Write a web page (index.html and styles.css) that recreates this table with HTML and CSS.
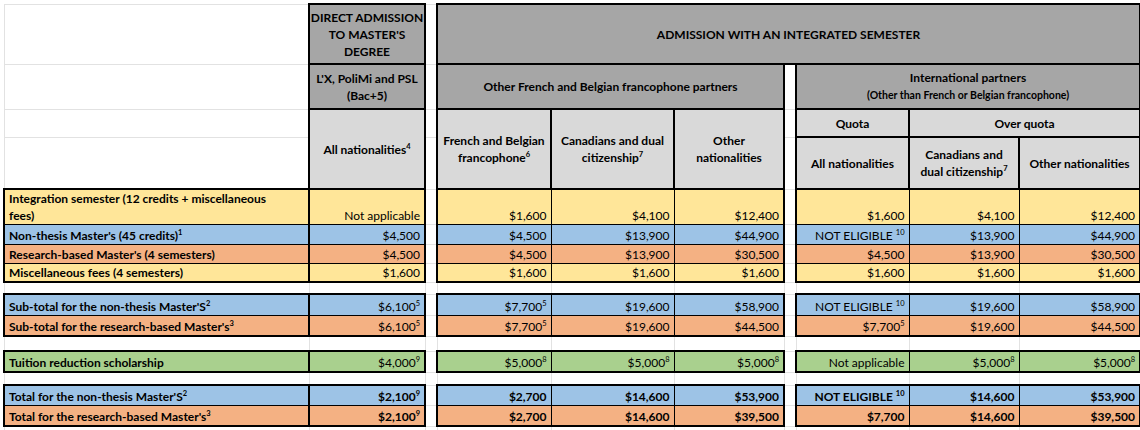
FILE: index.html
```html
<!DOCTYPE html>
<html lang="en">
<head>
<meta charset="utf-8">
<title>Tuition fees</title>
<link rel="stylesheet" href="styles.css">
</head>
<body>
<table class="sheet">
  <colgroup>
    <col class="c-a"><col class="c-b"><col class="c-sp"><col class="c-c"><col class="c-d"><col class="c-e"><col class="c-sp"><col class="c-f"><col class="c-g"><col class="c-h">
  </colgroup>
  <tr class="h1">
    <td class="blank"></td>
    <td class="hd dark">DIRECT ADMISSION<br>TO MASTER'S<br>DEGREE</td>
    <td class="blank"></td>
    <td class="hd dark" colspan="7">ADMISSION WITH AN INTEGRATED SEMESTER</td>
  </tr>
  <tr class="h2">
    <td class="blank"></td>
    <td class="hd dark">L'X, PoliMi and PSL<br>(Bac+5)</td>
    <td class="blank"></td>
    <td class="hd dark" colspan="3">Other French and Belgian francophone partners</td>
    <td class="blank"></td>
    <td class="hd dark" colspan="3">International partners<br><span class="small">(Other than French or Belgian francophone)</span></td>
  </tr>
  <tr class="h3">
    <td class="blank"></td>
    <td class="hd light" rowspan="2">All nationalities<sup class="s">4</sup></td>
    <td class="blank"></td>
    <td class="hd light" rowspan="2">French and Belgian<br>francophone<sup class="s">6</sup></td>
    <td class="hd light" rowspan="2">Canadians and dual<br>citizenship<sup class="s">7</sup></td>
    <td class="hd light" rowspan="2">Other<br>nationalities</td>
    <td class="blank"></td>
    <td class="hd light">Quota</td>
    <td class="hd light" colspan="2">Over quota</td>
  </tr>
  <tr class="h4">
    <td class="blank"></td>
    <td class="blank"></td>
    <td class="blank"></td>
    <td class="hd light">All nationalities</td>
    <td class="hd light">Canadians and<br>dual citizenship<sup class="s">7</sup></td>
    <td class="hd light">Other nationalities</td>
  </tr>

  <tr class="r-int top yel">
    <td class="lbl gl gr wrap">Integration semester (12 credits + miscellaneous<br>fees)</td>
    <td class="num gl gr">Not applicable</td>
    <td class="blank"></td>
    <td class="num gl">$1,600</td><td class="num">$4,100</td><td class="num gr">$12,400</td>
    <td class="blank"></td>
    <td class="num gl">$1,600</td><td class="num">$4,100</td><td class="num gr">$12,400</td>
  </tr>
  <tr class="r20 blu">
    <td class="lbl gl gr">Non-thesis Master's (45 credits)<sup class="s">1</sup></td>
    <td class="num gl gr">$4,500</td>
    <td class="blank"></td>
    <td class="num gl">$4,500</td><td class="num">$13,900</td><td class="num gr">$44,900</td>
    <td class="blank"></td>
    <td class="num gl">NOT ELIGIBLE <sup class="s">10</sup></td><td class="num">$13,900</td><td class="num gr">$44,900</td>
  </tr>
  <tr class="r19 ora">
    <td class="lbl gl gr">Research-based Master's (4 semesters)</td>
    <td class="num gl gr">$4,500</td>
    <td class="blank"></td>
    <td class="num gl">$4,500</td><td class="num">$13,900</td><td class="num gr">$30,500</td>
    <td class="blank"></td>
    <td class="num gl">$4,500</td><td class="num">$13,900</td><td class="num gr">$30,500</td>
  </tr>
  <tr class="r18 bot yel">
    <td class="lbl gl gr">Miscellaneous fees (4 semesters)</td>
    <td class="num gl gr">$1,600</td>
    <td class="blank"></td>
    <td class="num gl">$1,600</td><td class="num">$1,600</td><td class="num gr">$1,600</td>
    <td class="blank"></td>
    <td class="num gl">$1,600</td><td class="num">$1,600</td><td class="num gr">$1,600</td>
  </tr>

  <tr class="gap g12">
    <td class="blank"></td><td class="blank"></td><td class="blank"></td><td class="blank"></td><td class="blank"></td><td class="blank"></td><td class="blank"></td><td class="blank"></td><td class="blank"></td><td class="blank"></td>
  </tr>

  <tr class="r21 top blu">
    <td class="lbl gl gr">Sub-total for the non-thesis Master'S<sup class="s">2</sup></td>
    <td class="num gl gr">$6,100<sup class="s">5</sup></td>
    <td class="blank"></td>
    <td class="num gl">$7,700<sup class="s">5</sup></td><td class="num">$19,600</td><td class="num gr">$58,900</td>
    <td class="blank"></td>
    <td class="num gl">NOT ELIGIBLE <sup class="s">10</sup></td><td class="num">$19,600</td><td class="num gr">$58,900</td>
  </tr>
  <tr class="r21 bot ora">
    <td class="lbl gl gr">Sub-total for the research-based Master's<sup class="s">3</sup></td>
    <td class="num gl gr">$6,100<sup class="s">5</sup></td>
    <td class="blank"></td>
    <td class="num gl">$7,700<sup class="s">5</sup></td><td class="num">$19,600</td><td class="num gr">$44,500</td>
    <td class="blank"></td>
    <td class="num gl">$7,700<sup class="s">5</sup></td><td class="num">$19,600</td><td class="num gr">$44,500</td>
  </tr>

  <tr class="gap g15">
    <td class="blank"></td><td class="blank"></td><td class="blank"></td><td class="blank"></td><td class="blank"></td><td class="blank"></td><td class="blank"></td><td class="blank"></td><td class="blank"></td><td class="blank"></td>
  </tr>

  <tr class="r21 top bot grn">
    <td class="lbl gl gr">Tuition reduction scholarship</td>
    <td class="num gl gr">$4,000<sup class="s">9</sup></td>
    <td class="blank"></td>
    <td class="num gl">$5,000<sup class="s">8</sup></td><td class="num">$5,000<sup class="s">8</sup></td><td class="num gr">$5,000<sup class="s">8</sup></td>
    <td class="blank"></td>
    <td class="num gl">Not applicable</td><td class="num">$5,000<sup class="s">8</sup></td><td class="num gr">$5,000<sup class="s">8</sup></td>
  </tr>

  <tr class="gap g13">
    <td class="blank"></td><td class="blank"></td><td class="blank"></td><td class="blank"></td><td class="blank"></td><td class="blank"></td><td class="blank"></td><td class="blank"></td><td class="blank"></td><td class="blank"></td>
  </tr>

  <tr class="r20 top blu strong">
    <td class="lbl gl gr">Total for the non-thesis Master'S<sup class="s">2</sup></td>
    <td class="num gl gr">$2,100<sup class="s">9</sup></td>
    <td class="blank"></td>
    <td class="num gl">$2,700</td><td class="num">$14,600</td><td class="num gr">$53,900</td>
    <td class="blank"></td>
    <td class="num gl">NOT ELIGIBLE <sup class="s">10</sup></td><td class="num">$14,600</td><td class="num gr">$53,900</td>
  </tr>
  <tr class="r21 bot ora strong">
    <td class="lbl gl gr">Total for the research-based Master's<sup class="s">3</sup></td>
    <td class="num gl gr">$2,100<sup class="s">9</sup></td>
    <td class="blank"></td>
    <td class="num gl">$2,700</td><td class="num">$14,600</td><td class="num gr">$39,500</td>
    <td class="blank"></td>
    <td class="num gl">$7,700</td><td class="num">$14,600</td><td class="num gr">$39,500</td>
  </tr>

  <tr class="gap g8">
    <td class="blank"></td><td class="blank"></td><td class="blank"></td><td class="blank"></td><td class="blank"></td><td class="blank"></td><td class="blank"></td><td class="blank"></td><td class="blank"></td><td class="blank"></td>
  </tr>
</table>
</body>
</html>
```

FILE: styles.css
```css
html, body {
  margin: 0;
  padding: 0;
  background: #ffffff;
}

.sheet {
  border-collapse: collapse;
  table-layout: fixed;
  width: 1136px;
  margin: 3px 0 0 3px;
  font-family: Lato, "Open Sans", sans-serif;
  font-size: 12px;
  line-height: 17px;
  color: #000000;
}

.c-a { width: 305px; }
.c-b { width: 116px; }
.c-sp { width: 12px; }
.c-c { width: 114px; }
.c-d { width: 123px; }
.c-e { width: 110px; }
.c-f { width: 113px; }
.c-g { width: 110px; }
.c-h { width: 121px; }

.sheet td {
  padding: 0 4px;
  white-space: nowrap;
  overflow: hidden;
  border: 1px solid #000000;
  vertical-align: bottom;
}

.sheet td.blank {
  background: #ffffff;
  border: 1px solid #e2e2e2;
  padding: 0;
}

/* header rows */
.h1 { height: 60px; }
.h2 { height: 45px; }
.h3 { height: 28px; }
.h4 { height: 52px; }

.sheet td.hd {
  border: 2px solid #000000;
  text-align: center;
  vertical-align: middle;
  font-weight: 700;
  white-space: nowrap;
  padding: 0;
}

.dark { background: #a6a6a6; }
.light { background: #d9d9d9; }

.small {
  font-size: 10.5px;
}

/* data rows */
.r-int { height: 35px; }
.r18 { height: 18px; }
.r19 { height: 19px; }
.r20 { height: 20px; }
.r21 { height: 21px; }
.g8 { height: 6px; }
.g12 { height: 12px; }
.g13 { height: 13px; }
.g15 { height: 15px; }

.yel td { background: #ffe699; }
.blu td { background: #9dc3e6; }
.ora td { background: #f4b183; }
.grn td { background: #a9d08e; }

.top td:not(.blank) { border-top-width: 2px; }
.bot td:not(.blank) { border-bottom-width: 2px; }
.sheet td.gl { border-left-width: 2px; }
.sheet td.gr { border-right-width: 2px; }

.lbl {
  text-align: left;
  font-weight: 700;
}

.num {
  text-align: right;
}

.strong .num {
  font-weight: 700;
}

.s {
  font-size: 7.5px;
  line-height: 0;
  vertical-align: 5px;
}
```
